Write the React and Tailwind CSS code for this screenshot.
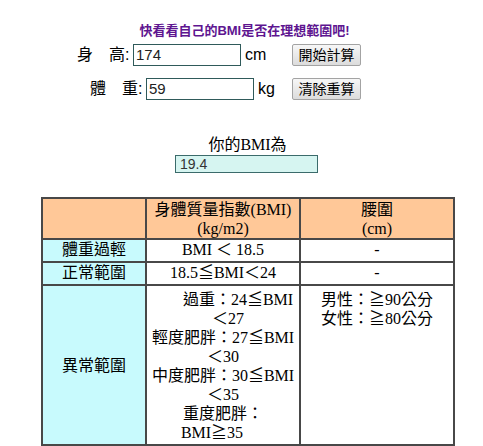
export default function App() {
  const sans = { fontFamily: '"Liberation Sans", "Noto Sans CJK TC", sans-serif' }
  const serif = { fontFamily: '"Liberation Serif", "Noto Sans CJK TC", serif' }
  const cell = 'border-2 border-[#484848] p-0 align-top text-center'

  return (
    <div className="w-[483px] h-[446px] overflow-hidden bg-white text-black" style={sans}>
      {/* title */}
      <div className="mt-[22px] h-[18px] pl-[6px] text-center text-[13px] leading-[18px] font-bold text-[#5e1590]">
        快看看自己的BMI是否在理想範圍吧!
      </div>

      {/* height */}
      <div className="mt-[4px] flex h-[22px] items-center pl-[77px] text-[16px]">
        <span className="w-[56px] whitespace-pre">身　高:</span>
        <input readOnly value="174"
          className="h-[22px] w-[108px] border border-[#2f5a5a] px-[2px] text-[15px] text-[#222] outline-none" />
        <span className="w-[51px] pl-[4px]">cm</span>
        <button className="h-[22px] w-[69px] rounded-[2px] border border-[#a3a3a3] bg-gradient-to-b from-[#f7f7f7] to-[#dcdcdc] text-[14px] leading-[20px]">
          開始計算
        </button>
      </div>

      {/* weight */}
      <div className="mt-[12px] flex h-[22px] items-center pl-[90px] text-[16px]">
        <span className="w-[56px] whitespace-pre">體　重:</span>
        <input readOnly value="59"
          className="h-[22px] w-[108px] border border-[#2f5a5a] px-[2px] text-[15px] text-[#222] outline-none" />
        <span className="w-[38px] pl-[4px]">kg</span>
        <button className="h-[22px] w-[69px] rounded-[2px] border border-[#a3a3a3] bg-gradient-to-b from-[#f7f7f7] to-[#dcdcdc] text-[14px] leading-[20px]">
          清除重算
        </button>
      </div>

      {/* result */}
      <div className="mt-[36px] h-[18px] pl-[12px] text-center text-[16px] leading-[18px]" style={serif}>
        你的BMI為
      </div>
      <input readOnly value="19.4"
        className="ml-[175px] mt-[1px] block h-[18px] w-[143px] border border-[#3b6b6b] bg-[#d6f5f1] px-[4px] text-[14px] text-[#333] outline-none" />

      {/* table */}
      <table className="ml-[41px] mt-[24px] w-[412px] table-fixed border-collapse text-[16px] leading-[19px]" style={serif}>
        <colgroup>
          <col className="w-[104px]" />
          <col className="w-[154px]" />
          <col className="w-[154px]" />
        </colgroup>
        <tbody>
          <tr className="bg-[#ffc898]">
            <td className={`${cell} h-[41px]`}></td>
            <td className={`${cell} pt-[1px]`}>身體質量指數(BMI)<br />(kg/m2)</td>
            <td className={`${cell} pt-[1px]`}>腰圍<br />(cm)</td>
          </tr>
          <tr>
            <td className={`${cell} h-[23px] bg-[#c8fafd] align-middle`}>體重過輕</td>
            <td className={`${cell} align-middle`}>BMI ＜ 18.5</td>
            <td className={`${cell} align-middle`}>-</td>
          </tr>
          <tr>
            <td className={`${cell} h-[23px] bg-[#c8fafd] align-middle`}>正常範圍</td>
            <td className={`${cell} align-middle`}>18.5≦BMI＜24</td>
            <td className={`${cell} align-middle`}>-</td>
          </tr>
          <tr>
            <td className={`${cell} h-[160px] bg-[#c8fafd] !align-middle`}>異常範圍</td>
            <td className={`${cell} pt-[4px]`}>
              <div className="pl-[30px]">過重：24≦BMI</div>
              <div className="pl-[10px]">＜27</div>
              <div>輕度肥胖：27≦BMI</div>
              <div>＜30</div>
              <div>中度肥胖：30≦BMI</div>
              <div>＜35</div>
              <div>重度肥胖：</div>
              <div className="pr-[22px]">BMI≧35</div>
            </td>
            <td className={`${cell} pt-[4px]`}>
              <div>男性：≧90公分</div>
              <div>女性：≧80公分</div>
            </td>
          </tr>
        </tbody>
      </table>
    </div>
  )
}
